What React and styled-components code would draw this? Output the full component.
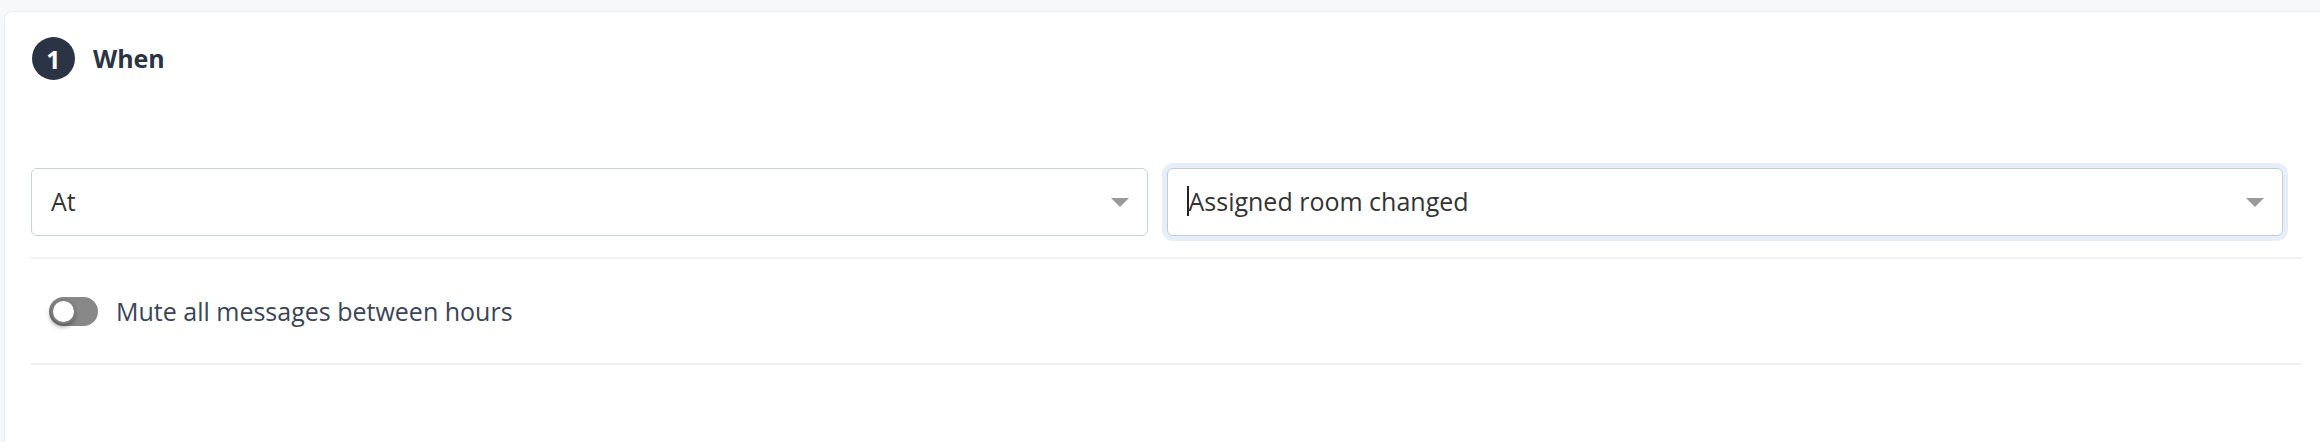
import React from 'react';
import styled, { createGlobalStyle } from 'styled-components';

const GlobalStyle = createGlobalStyle`
    html, body {
        margin: 0;
        padding: 0;
        background-color: #F7F8FA;
        font-family: 'Open Sans', 'Liberation Sans', sans-serif;
    }
    * {
        box-sizing: border-box;
    }
`
const Page = styled.main`
    padding: 11px 0 0 4px;
    height: 442px;
    overflow: hidden;
`
const Card = styled.section`
    background-color: #FFFFFF;
    border: 1px solid #ECEDF1;
    border-right: none;
    border-bottom: none;
    border-radius: 8px 0 0 0;
    padding: 25px 18px 0 26px;
    height: 100%;
`
const Header = styled.header`
    display: flex;
    align-items: center;
    gap: 18px;
    height: 43px;
`
const StepBadge = styled.span`
    display: flex;
    align-items: center;
    justify-content: center;
    width: 43px;
    height: 43px;
    border-radius: 50%;
    background-color: #2B3445;
    color: #FFFFFF;
    font-weight: 700;
    font-size: 25px;
    margin-left: 1px;
`
const Title = styled.h2`
    margin: 0 0 2px 0;
    font-size: 25px;
    font-weight: 700;
    color: #2B3445;
`
const SelectRow = styled.div`
    display: grid;
    grid-template-columns: 1fr 1fr;
    column-gap: 19px;
    padding-right: 19px;
    margin-top: 88px;
`
const Select = styled.div`
    display: flex;
    align-items: center;
    height: 68px;
    padding: 0 18px 3px 19px;
    border: 1px solid ${({ focused }) => (focused ? '#C3CDDA' : '#C9D1DC')};
    border-radius: 6px;
    background-color: #FFFFFF;
    box-shadow: ${({ focused }) => (focused ? '0 0 0 5px #E7EEFA' : 'none')};
    font-size: 25px;
    color: #333333;
`
const SelectValue = styled.span`
    flex: 1;
    display: flex;
    align-items: center;
`
const Caret = styled.span`
    display: inline-block;
    width: 2px;
    height: 30px;
    background-color: #222222;
`
const Arrow = styled.span`
    width: 0;
    height: 0;
    margin-top: 3px;
    border-left: 9px solid transparent;
    border-right: 9px solid transparent;
    border-top: 9px solid #9A9A9A;
`
const Divider = styled.hr`
    margin: ${({ flush }) => (flush ? '0' : '21px 0 0 0')};
    border: none;
    height: 2px;
    background-color: #F0F0F5;
`
const ToggleRow = styled.div`
    display: flex;
    align-items: center;
    gap: 18px;
    height: 104px;
    padding-left: 18px;
    font-size: 25px;
    color: #3A4556;
`
const Track = styled.span`
    position: relative;
    display: inline-block;
    width: 49px;
    height: 29px;
    border-radius: 15px;
    background-color: ${({ $on }) => ($on ? '#2B3445' : '#888888')};
`
const Knob = styled.span`
    position: absolute;
    top: 2px;
    left: 2px;
    width: 25px;
    height: 25px;
    border-radius: 50%;
    background-color: #FFFFFF;
    border: 2px solid #7E7E7E;
    box-shadow: -1px 3px 4px rgba(0, 0, 0, 0.35);
`

function Toggle({ on }) {
    return (
        <Track $on={on}>
            <Knob />
        </Track>
    )
}

function App() {
    return (
        <Page>
            <GlobalStyle />
            <Card>
                <Header>
                    <StepBadge>1</StepBadge>
                    <Title>When</Title>
                </Header>
                <SelectRow>
                    <Select>
                        <SelectValue>At</SelectValue>
                        <Arrow />
                    </Select>
                    <Select focused>
                        <SelectValue><Caret />Assigned room changed</SelectValue>
                        <Arrow />
                    </Select>
                </SelectRow>
                <Divider />
                <ToggleRow>
                    <Toggle on={false} />
                    Mute all messages between hours
                </ToggleRow>
                <Divider flush />
            </Card>
        </Page>
    )
}

export default App;
